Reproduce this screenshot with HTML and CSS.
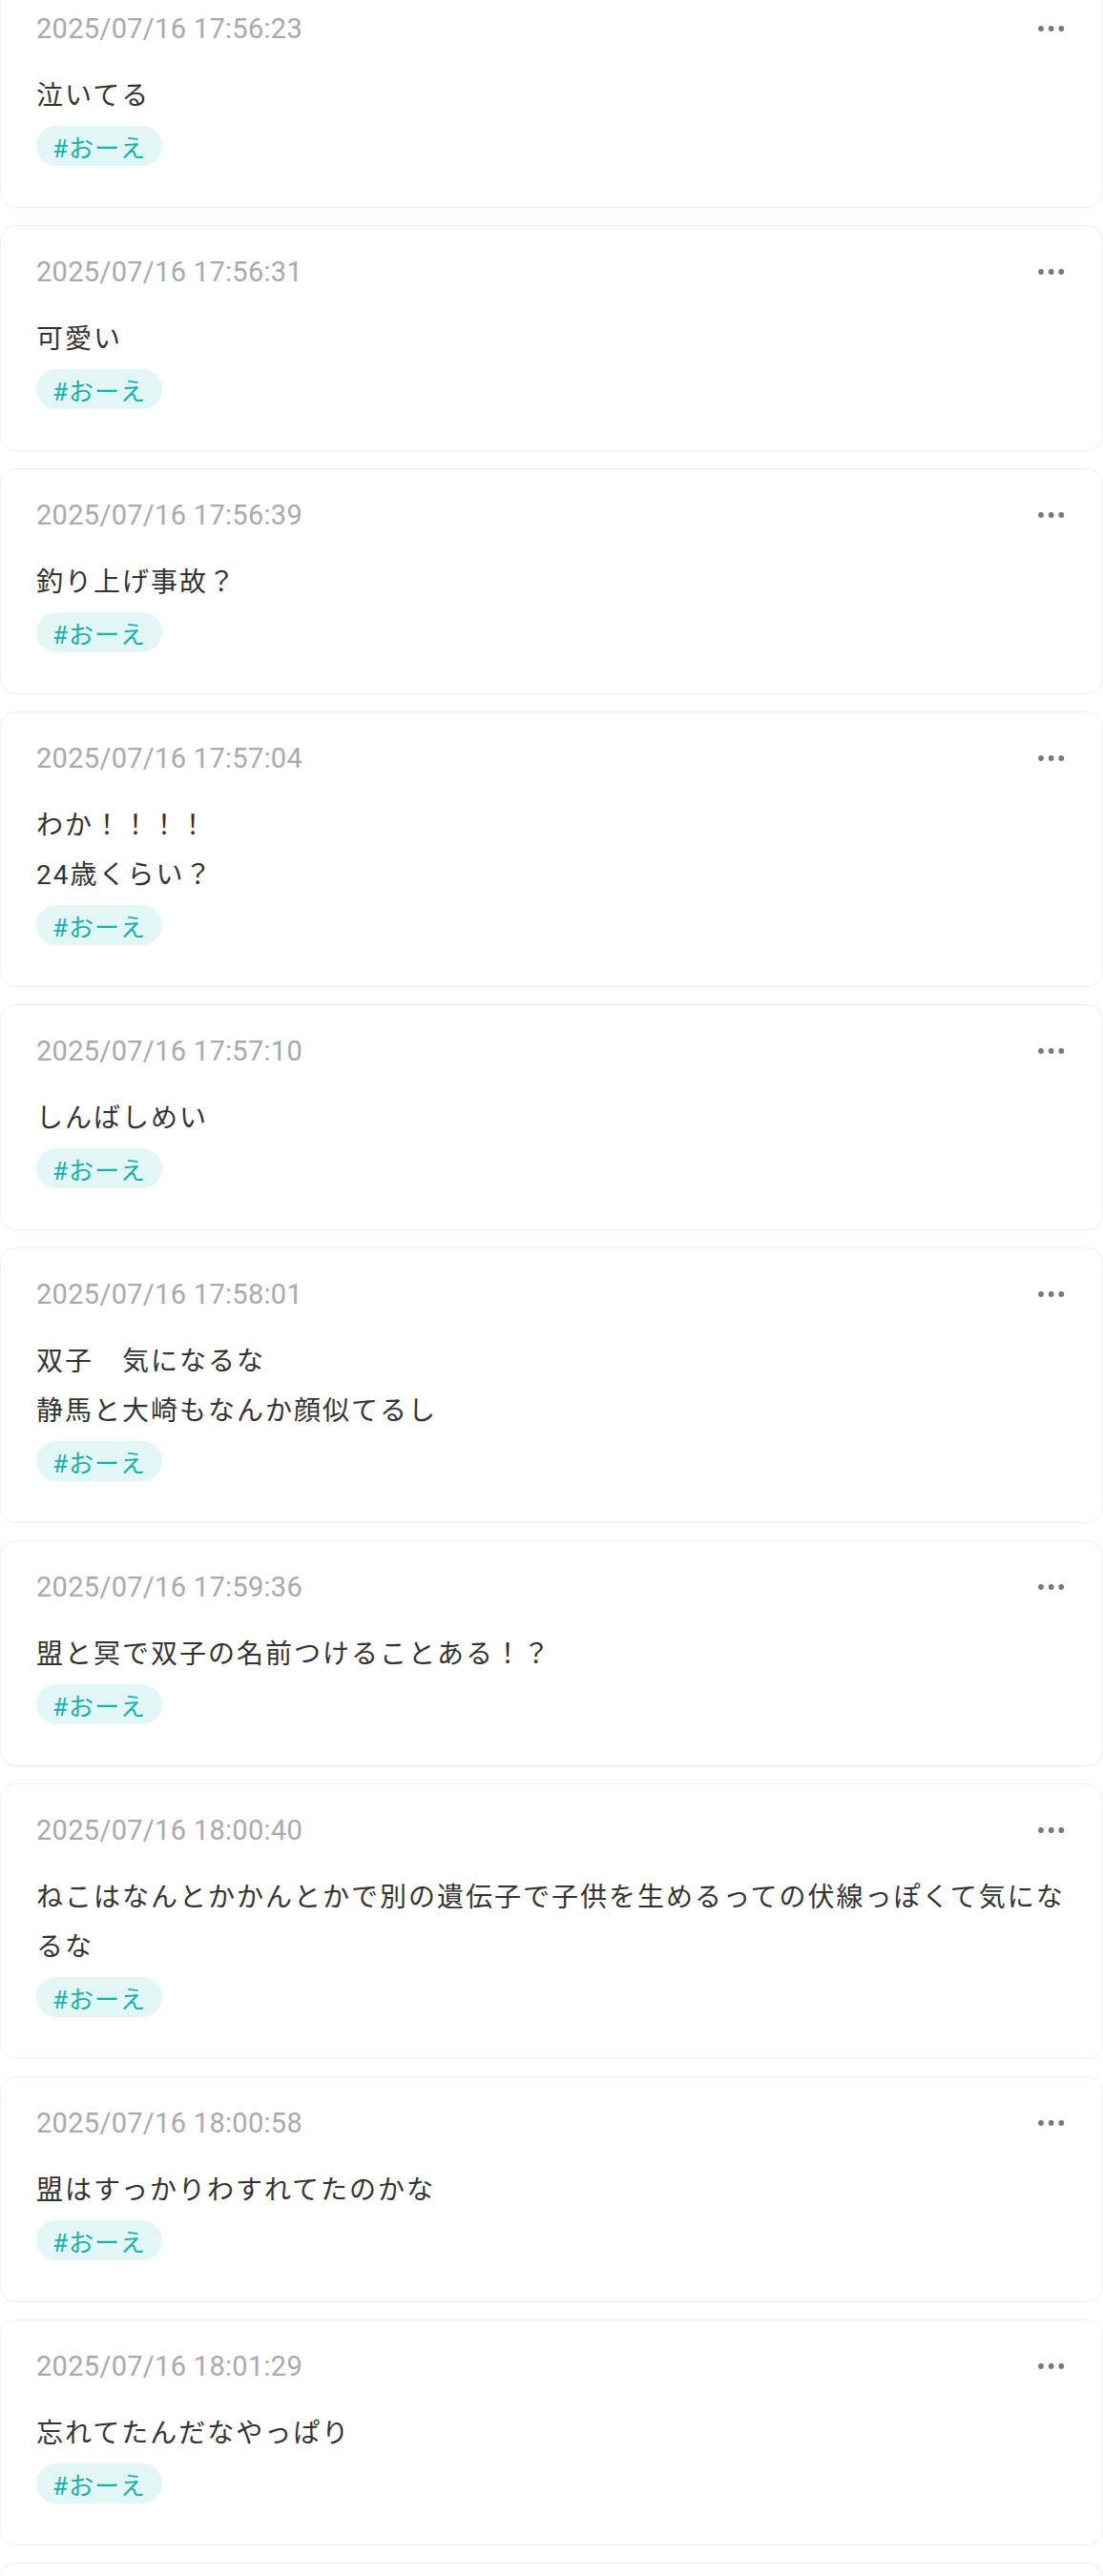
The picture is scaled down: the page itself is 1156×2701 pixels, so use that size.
FILE: index.html
```html
<!DOCTYPE html>
<html lang="ja">
<head>
<meta charset="utf-8">
<title>メモ</title>
<link rel="stylesheet" href="styles.css">
</head>
<body>
<main class="feed">
  <article class="card">
    <div class="card-head"><time class="date">2025/07/16 17:56:23</time><button class="more" aria-label="メニュー"><svg viewBox="0 0 32 8" width="32" height="8"><circle cx="4" cy="4" r="2.9"/><circle cx="14.7" cy="4" r="2.9"/><circle cx="25.3" cy="4" r="2.9"/></svg></button></div>
    <p class="text">泣いてる</p>
    <div class="tags"><span class="tag">#おーえ</span></div>
  </article>
  <article class="card">
    <div class="card-head"><time class="date">2025/07/16 17:56:31</time><button class="more" aria-label="メニュー"><svg viewBox="0 0 32 8" width="32" height="8"><circle cx="4" cy="4" r="2.9"/><circle cx="14.7" cy="4" r="2.9"/><circle cx="25.3" cy="4" r="2.9"/></svg></button></div>
    <p class="text">可愛い</p>
    <div class="tags"><span class="tag">#おーえ</span></div>
  </article>
  <article class="card">
    <div class="card-head"><time class="date">2025/07/16 17:56:39</time><button class="more" aria-label="メニュー"><svg viewBox="0 0 32 8" width="32" height="8"><circle cx="4" cy="4" r="2.9"/><circle cx="14.7" cy="4" r="2.9"/><circle cx="25.3" cy="4" r="2.9"/></svg></button></div>
    <p class="text">釣り上げ事故？</p>
    <div class="tags"><span class="tag">#おーえ</span></div>
  </article>
  <article class="card">
    <div class="card-head"><time class="date">2025/07/16 17:57:04</time><button class="more" aria-label="メニュー"><svg viewBox="0 0 32 8" width="32" height="8"><circle cx="4" cy="4" r="2.9"/><circle cx="14.7" cy="4" r="2.9"/><circle cx="25.3" cy="4" r="2.9"/></svg></button></div>
    <p class="text">わか！！！！<br>24歳くらい？</p>
    <div class="tags"><span class="tag">#おーえ</span></div>
  </article>
  <article class="card">
    <div class="card-head"><time class="date">2025/07/16 17:57:10</time><button class="more" aria-label="メニュー"><svg viewBox="0 0 32 8" width="32" height="8"><circle cx="4" cy="4" r="2.9"/><circle cx="14.7" cy="4" r="2.9"/><circle cx="25.3" cy="4" r="2.9"/></svg></button></div>
    <p class="text">しんばしめい</p>
    <div class="tags"><span class="tag">#おーえ</span></div>
  </article>
  <article class="card">
    <div class="card-head"><time class="date">2025/07/16 17:58:01</time><button class="more" aria-label="メニュー"><svg viewBox="0 0 32 8" width="32" height="8"><circle cx="4" cy="4" r="2.9"/><circle cx="14.7" cy="4" r="2.9"/><circle cx="25.3" cy="4" r="2.9"/></svg></button></div>
    <p class="text">双子　気になるな<br>静馬と大崎もなんか顔似てるし</p>
    <div class="tags"><span class="tag">#おーえ</span></div>
  </article>
  <article class="card">
    <div class="card-head"><time class="date">2025/07/16 17:59:36</time><button class="more" aria-label="メニュー"><svg viewBox="0 0 32 8" width="32" height="8"><circle cx="4" cy="4" r="2.9"/><circle cx="14.7" cy="4" r="2.9"/><circle cx="25.3" cy="4" r="2.9"/></svg></button></div>
    <p class="text">盟と冥で双子の名前つけることある！？</p>
    <div class="tags"><span class="tag">#おーえ</span></div>
  </article>
  <article class="card">
    <div class="card-head"><time class="date">2025/07/16 18:00:40</time><button class="more" aria-label="メニュー"><svg viewBox="0 0 32 8" width="32" height="8"><circle cx="4" cy="4" r="2.9"/><circle cx="14.7" cy="4" r="2.9"/><circle cx="25.3" cy="4" r="2.9"/></svg></button></div>
    <p class="text">ねこはなんとかかんとかで別の遺伝子で子供を生めるっての伏線っぽくて気になるな</p>
    <div class="tags"><span class="tag">#おーえ</span></div>
  </article>
  <article class="card">
    <div class="card-head"><time class="date">2025/07/16 18:00:58</time><button class="more" aria-label="メニュー"><svg viewBox="0 0 32 8" width="32" height="8"><circle cx="4" cy="4" r="2.9"/><circle cx="14.7" cy="4" r="2.9"/><circle cx="25.3" cy="4" r="2.9"/></svg></button></div>
    <p class="text">盟はすっかりわすれてたのかな</p>
    <div class="tags"><span class="tag">#おーえ</span></div>
  </article>
  <article class="card">
    <div class="card-head"><time class="date">2025/07/16 18:01:29</time><button class="more" aria-label="メニュー"><svg viewBox="0 0 32 8" width="32" height="8"><circle cx="4" cy="4" r="2.9"/><circle cx="14.7" cy="4" r="2.9"/><circle cx="25.3" cy="4" r="2.9"/></svg></button></div>
    <p class="text">忘れてたんだなやっぱり</p>
    <div class="tags"><span class="tag">#おーえ</span></div>
  </article>
  <article class="card card-next" aria-hidden="true"></article>
</main>
</body>
</html>
```

FILE: styles.css
```css
html, body {
  margin: 0;
  padding: 0;
  background: #ffffff;
}

body {
  font-family: Roboto, "Noto Sans CJK JP", sans-serif;
  color: #333333;
}

.feed {
  display: flex;
  flex-direction: column;
  gap: 18px;
  margin-top: -19px;
}

.card {
  border: 1px solid #eeeeee;
  border-radius: 16px;
  padding: 30px 36px 43px 37px;
  background: #ffffff;
}

.card-next {
  min-height: 163px;
}

.card-head {
  display: flex;
  align-items: center;
  justify-content: space-between;
  height: 36px;
}

.date {
  font-size: 29px;
  line-height: 36px;
  color: #aaaaaa;
  letter-spacing: 0.3px;
}

.more {
  border: 0;
  background: none;
  padding: 0;
  width: 32px;
  height: 8px;
  display: flex;
}

.more svg {
  fill: #787878;
  display: block;
}

.text {
  margin: 27px 0 0;
  font-size: 28px;
  line-height: 52px;
  letter-spacing: 2px;
  color: #333333;
}

.tags {
  margin-top: 5px;
  display: flex;
}

.tag {
  display: inline-flex;
  align-items: center;
  height: 42px;
  padding: 0 17px 0 17px;
  border-radius: 21px;
  background: #e3f6f6;
  color: #16b2ad;
  font-size: 26px;
  letter-spacing: 1px;
}
```
